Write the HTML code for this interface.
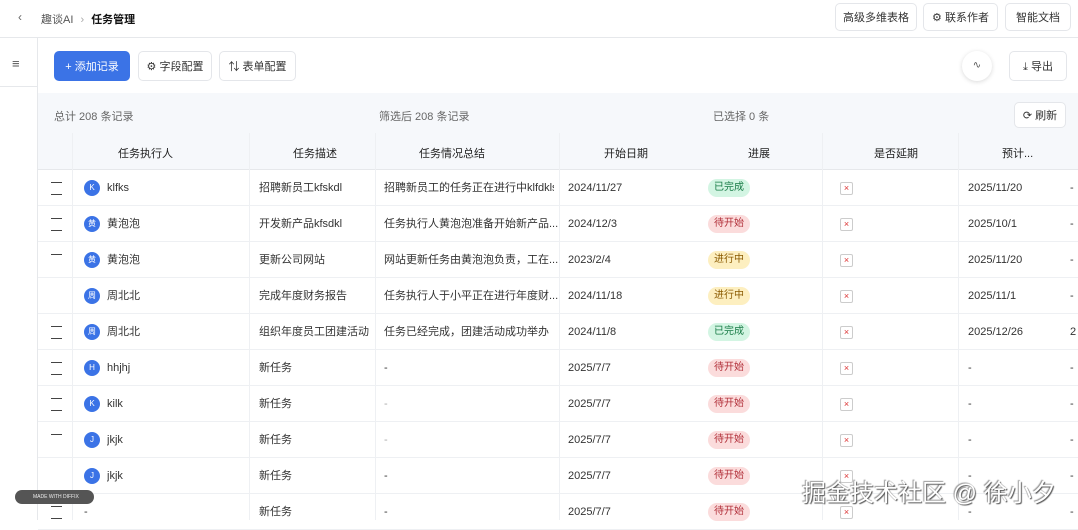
<!DOCTYPE html>
<html><head><meta charset="utf-8"><style>
*{box-sizing:border-box;margin:0;padding:0}
body{width:1078px;height:520px;overflow:hidden;background:#fff;font-family:"Liberation Sans","Noto Sans CJK SC",sans-serif;font-size:11px;color:#222;position:relative}
.a{position:absolute}
.btn{position:absolute;border:1px solid #e4e6ea;border-radius:5px;background:#fff;font-size:11px;color:#333;display:flex;align-items:center;justify-content:center;gap:4px}
.row{position:absolute;left:38px;width:1040px;height:36px;border-bottom:1px solid #eef0f3}
.c{position:absolute;top:0;height:36px;line-height:36px;white-space:nowrap;overflow:hidden;font-size:11px;color:#333}
.av{position:absolute;left:46px;top:10px;width:16px;height:16px;border-radius:50%;background:#3b73e6;color:#fff;font-size:8px;text-align:center;line-height:16px}
.bd{position:absolute;left:670px;top:9px;height:18px;line-height:18px;padding:0 6px;border-radius:9px;font-size:10px}
.g{background:#d3f5e3;color:#177a45}.r{background:#fbdcdc;color:#b2303a}.y{background:#fdefc0;color:#8a5a00}
.cb{position:absolute;left:802px;top:12px;width:13px;height:13px;border:1px solid #ccc;border-radius:2px;color:#d33;font-size:9px;line-height:11px;text-align:center}
.h{position:absolute;left:13px;width:11px;height:1px;background:#444}
.vl{position:absolute;top:133px;bottom:0;width:1px;background:#eef0f3}
</style></head><body>
<div class="a" style="left:0;top:0;width:1078px;height:38px;border-bottom:1px solid #e6e8eb"></div>
<div class="a" style="left:18px;top:10px;font-size:12px;color:#666">‹</div>
<div class="a" style="left:41px;top:11px;font-size:11px;color:#555">趣谈AI <span style="color:#aaa;margin:0 4px">›</span> <b style="color:#111;font-weight:600">任务管理</b></div>
<div class="btn" style="left:835px;top:3px;width:82px;height:28px">高级多维表格</div>
<div class="btn" style="left:923px;top:3px;width:75px;height:28px">⚙ 联系作者</div>
<div class="btn" style="left:1005px;top:3px;width:66px;height:28px">智能文档</div>
<div class="a" style="left:0;top:38px;width:38px;height:482px;border-right:1px solid #e6e8eb"></div>
<div class="a" style="left:0;top:86px;width:38px;height:1px;background:#e6e8eb"></div>
<div class="a" style="left:12px;top:56px;font-size:13px;color:#555">≡</div>
<div class="btn" style="left:54px;top:51px;width:76px;height:30px;background:#3b73e6;border-color:#3b73e6;color:#fff">+ 添加记录</div>
<div class="btn" style="left:138px;top:51px;width:74px;height:30px">⚙ 字段配置</div>
<div class="btn" style="left:219px;top:51px;width:77px;height:30px">⇅ 表单配置</div>
<div class="a" style="left:962px;top:51px;width:30px;height:30px;border-radius:50%;background:#fff;box-shadow:0 1px 5px rgba(0,0,0,.15);text-align:center;line-height:30px;font-size:10px;color:#555">∿</div>
<div class="btn" style="left:1009px;top:51px;width:58px;height:30px">⤓ 导出</div>
<div class="a" style="left:38px;top:93px;width:1040px;height:77px;background:#f6f8fb"></div>
<div class="a" style="left:54px;top:108px;color:#666">总计 208 条记录</div>
<div class="a" style="left:379px;top:108px;color:#666">筛选后 208 条记录</div>
<div class="a" style="left:713px;top:108px;color:#666">已选择 0 条</div>
<div class="btn" style="left:1014px;top:102px;width:52px;height:26px">⟳ 刷新</div>
<div class="a" style="left:38px;top:169px;width:1040px;height:1px;background:#e6e8eb"></div>
<div class="a" style="top:145px;left:38px;width:1040px;font-size:11px;color:#222">
<span class="a" style="left:80px">任务执行人</span><span class="a" style="left:255px">任务描述</span><span class="a" style="left:381px">任务情况总结</span><span class="a" style="left:566px">开始日期</span><span class="a" style="left:710px">进展</span><span class="a" style="left:836px">是否延期</span><span class="a" style="left:964px">预计...</span></div>
<div class="vl" style="left:72px"></div><div class="vl" style="left:249px"></div><div class="vl" style="left:375px"></div><div class="vl" style="left:559px"></div><div class="vl" style="left:822px"></div><div class="vl" style="left:958px"></div>

<div class="row" style="top:170px"><div class="h" style="top:12px"></div><div class="h" style="top:24px"></div><div class="av">K</div><div class="c" style="left:69px">klfks</div><div class="c" style="left:221px">招聘新员工kfskdl</div><div class="c" style="left:346px;width:170px">招聘新员工的任务正在进行中klfdkls</div><div class="c" style="left:530px">2024/11/27</div><div class="bd g">已完成</div><div class="cb">×</div><div class="c" style="left:930px">2025/11/20</div><div class="c" style="left:1032px">-</div></div>
<div class="row" style="top:206px"><div class="h" style="top:12px"></div><div class="h" style="top:24px"></div><div class="av">黄</div><div class="c" style="left:69px">黄泡泡</div><div class="c" style="left:221px">开发新产品kfsdkl</div><div class="c" style="left:346px">任务执行人黄泡泡准备开始新产品...</div><div class="c" style="left:530px">2024/12/3</div><div class="bd r">待开始</div><div class="cb">×</div><div class="c" style="left:930px">2025/10/1</div><div class="c" style="left:1032px">-</div></div>
<div class="row" style="top:242px"><div class="h" style="top:12px"></div><div class="av">黄</div><div class="c" style="left:69px">黄泡泡</div><div class="c" style="left:221px">更新公司网站</div><div class="c" style="left:346px">网站更新任务由黄泡泡负责，工在...</div><div class="c" style="left:530px">2023/2/4</div><div class="bd y">进行中</div><div class="cb">×</div><div class="c" style="left:930px">2025/11/20</div><div class="c" style="left:1032px">-</div></div>
<div class="row" style="top:278px"><div class="av">周</div><div class="c" style="left:69px">周北北</div><div class="c" style="left:221px">完成年度财务报告</div><div class="c" style="left:346px">任务执行人于小平正在进行年度财...</div><div class="c" style="left:530px">2024/11/18</div><div class="bd y">进行中</div><div class="cb">×</div><div class="c" style="left:930px">2025/11/1</div><div class="c" style="left:1032px">-</div></div>
<div class="row" style="top:314px"><div class="h" style="top:12px"></div><div class="h" style="top:24px"></div><div class="av">周</div><div class="c" style="left:69px">周北北</div><div class="c" style="left:221px">组织年度员工团建活动</div><div class="c" style="left:346px">任务已经完成，团建活动成功举办</div><div class="c" style="left:530px">2024/11/8</div><div class="bd g">已完成</div><div class="cb">×</div><div class="c" style="left:930px">2025/12/26</div><div class="c" style="left:1032px">2</div></div>
<div class="row" style="top:350px"><div class="h" style="top:12px"></div><div class="h" style="top:24px"></div><div class="av">H</div><div class="c" style="left:69px">hhjhj</div><div class="c" style="left:221px">新任务</div><div class="c" style="left:346px">-</div><div class="c" style="left:530px">2025/7/7</div><div class="bd r">待开始</div><div class="cb">×</div><div class="c" style="left:930px">-</div><div class="c" style="left:1032px">-</div></div>
<div class="row" style="top:386px"><div class="h" style="top:12px"></div><div class="h" style="top:24px"></div><div class="av">K</div><div class="c" style="left:69px">kilk</div><div class="c" style="left:221px">新任务</div><div class="c" style="left:346px;color:#aaa">-</div><div class="c" style="left:530px">2025/7/7</div><div class="bd r">待开始</div><div class="cb">×</div><div class="c" style="left:930px">-</div><div class="c" style="left:1032px">-</div></div>
<div class="row" style="top:422px"><div class="h" style="top:12px"></div><div class="av">J</div><div class="c" style="left:69px">jkjk</div><div class="c" style="left:221px">新任务</div><div class="c" style="left:346px;color:#aaa">-</div><div class="c" style="left:530px">2025/7/7</div><div class="bd r">待开始</div><div class="cb">×</div><div class="c" style="left:930px">-</div><div class="c" style="left:1032px">-</div></div>
<div class="row" style="top:458px"><div class="av">J</div><div class="c" style="left:69px">jkjk</div><div class="c" style="left:221px">新任务</div><div class="c" style="left:346px">-</div><div class="c" style="left:530px">2025/7/7</div><div class="bd r">待开始</div><div class="cb">×</div><div class="c" style="left:930px">-</div><div class="c" style="left:1032px">-</div></div>
<div class="row" style="top:494px"><div class="h" style="top:12px"></div><div class="h" style="top:24px"></div><div class="c" style="left:46px">-</div><div class="c" style="left:221px">新任务</div><div class="c" style="left:346px">-</div><div class="c" style="left:530px">2025/7/7</div><div class="bd r">待开始</div><div class="cb">×</div><div class="c" style="left:930px">-</div><div class="c" style="left:1032px">-</div></div>

<div class="a" style="left:15px;top:490px;width:79px;height:14px;border-radius:7px;background:#555;color:#eee;font-size:5px;line-height:14px;padding-left:18px">MADE WITH DIFFIX</div>
<div class="a" style="left:802px;top:473px;font-size:24px;color:#fff;text-shadow:1px 1px 1px #555,-1px -1px 1px #999;letter-spacing:0px">掘金技术社区 @ 徐小夕</div>
</body></html>
